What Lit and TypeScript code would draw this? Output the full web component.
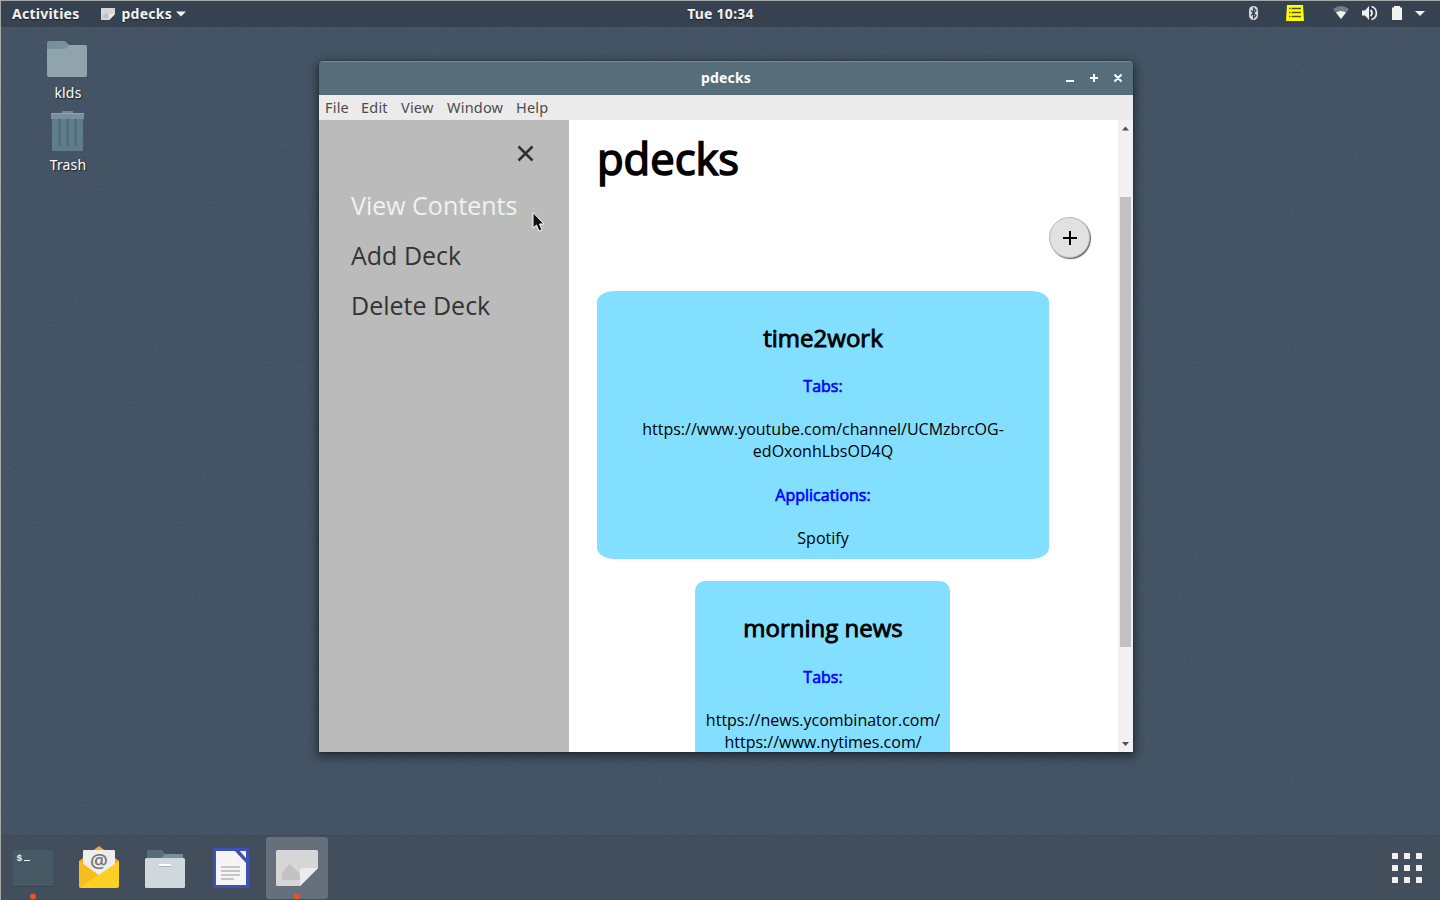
import { LitElement, html, css, svg } from "lit";
import { customElement } from "lit/decorators.js";

const note = () => svg`
  <path d="M1.500 0H40.500Q42 0 42 1.500V18L24 36H1.500Q0 36 0 34.500V1.500Q0 0 1.500 0Z" fill="#d6d6d6"/>
  <path d="M6 30V22.500L13.500 14L24 24V30Z" fill="#c2c2c2"/>
  <path d="M24 36V19.500Q24 18 25.500 18H42Z" fill="#ececec"/>`;

@customElement("app-root")
export class AppRoot extends LitElement {
  static styles = css`
    :host { display: block; width: 1440px; height: 900px; overflow: hidden; font-family: "Open Sans", sans-serif; }
    * { box-sizing: border-box; }
    svg { display: block; flex: none; }
    .desktop { position: relative; width: 1440px; height: 900px; display: flex; flex-direction: column; background: #405062; border-left: 1px solid #a5aaa8; }
    .grain { position: absolute; left: 0; top: 0; opacity: .07; }
    .topbar { position: relative; height: 27px; flex: none; background: #364250; border-top: 1px solid #a5aaa8; display: grid; grid-template-columns: 1fr auto 1fr; align-items: center; color: #f2f2f0; font: 700 14px/26px "Noto Sans", sans-serif; text-shadow: 0 1px 1px #0008; }
    .topbar span { height: 26px; line-height: 25px; white-space: nowrap; letter-spacing: .25px; }
    .left { display: flex; align-items: center; padding-left: 11px; }
    .left .app-icon { margin: 0 7px 0 21px; }
    .left .caret { margin-left: 4px; }
    .right { display: flex; justify-content: flex-end; }
    .main { flex: 1; position: relative; }
    .shortcuts { width: 132px; padding-top: 14px; display: flex; flex-direction: column; align-items: center; color: #fff; font: 14px/20px "Noto Sans", sans-serif; text-shadow: 1px 1px 1px #000a; }
    .shortcut { height: 70px; display: flex; flex-direction: column; align-items: center; gap: 5px; }
    .shortcut.trash { gap: 3px; }
    .shortcut span { padding-left: 2px; letter-spacing: .15px; }
    .shortcut.trash svg { margin-left: 1px; }
    .dock { position: relative; height: 65px; flex: none; background: #424e5b; border-top: 1px solid #3e4a57; display: flex; justify-content: space-between; }
    .window { position: absolute; left: 318px; top: 34px; width: 814px; height: 691px; display: flex; flex-direction: column; border-radius: 4px 4px 0 0; overflow: hidden; box-shadow: 0 3px 10px 2px #0007, 0 0 2px #0006; }
    .title { height: 34px; flex: none; background: #566e79; border-top: 1px solid #778b94; color: #fff; display: grid; grid-template-columns: 1fr auto 1fr; align-items: center; font: 700 14px/33px "Noto Sans", sans-serif; }
    .title span { height: 33px; line-height: 31px; letter-spacing: .2px; }
    .title svg { justify-self: end; }
    .menu { height: 25px; flex: none; background: #ebebeb; color: #4b4b4b; display: grid; grid-template-columns: 36px 40px 46px 69px auto; padding-left: 6px; font: 14.500px/25px "Noto Sans", sans-serif; letter-spacing: .2px; }
    .body { flex: 1; min-height: 0; display: flex; background: #fff; }
    .side { width: 250px; flex: none; background: #bbb; padding: 25px 32px; color: #333; font-size: 25px; line-height: 50px; }
    .side .close { margin: 0 3px 18px auto; }
    .side div { height: 50px; white-space: nowrap; }
    .side .hover { color: #f1f1f1; }
    .page { width: 549px; padding: 0 28px; overflow: hidden; color: #000; font-size: 16px; line-height: 22px; text-align: center; }
    h1 { margin: 8px 0 28px; text-align: left; font-size: 43.500px; line-height: 61px; height: 61px; font-weight: 400; -webkit-text-stroke: 1.600px #000; }
    .add { width: 41px; height: 41px; margin: 0 0 33px 452px; border-radius: 50%; background: #e1e1e1; border: 1px solid #b8b8b8; box-shadow: 1px 1px 1px #666; display: grid; place-items: center; }
    .card { width: 452px; height: 268px; margin-bottom: 22px; padding: 29px 10px 0; border-radius: 18px / 11px; background: #83dfff; }
    .card.small { width: 255px; margin-left: 98px; padding: 29px 9px 0 10px; border-radius: 10px; }
    h2 { margin: 0 0 19px; height: 36px; font-size: 24px; line-height: 36px; font-weight: 400; -webkit-text-stroke: .9px #000; }
    .small h2 { margin-bottom: 20px; }
    h4 { margin: 0 0 21px; height: 22px; font-size: 16px; line-height: 22px; font-weight: 400; color: #00f; -webkit-text-stroke: .6px #00f; }
    p { margin: 0 0 22px; white-space: nowrap; }
    .scroll { width: 15px; flex: none; background: #f1f1f1; display: flex; flex-direction: column; align-items: center; padding: 6px 0 5px; }
    .thumb { width: 11px; height: 450px; margin: 66px 0 auto; background: #c1c1c1; }
    .cursor { position: absolute; left: 531px; top: 212px; }
  `;

  render() {
    return html`<div class="desktop">
      <svg class="grain" width="1439" height="900"><filter id="g"><feTurbulence type="fractalNoise" baseFrequency=".45" numOctaves="2"/><feColorMatrix type="saturate" values="0"/></filter><rect width="1439" height="900" filter="url(#g)"/></svg>
      <div class="topbar">
        <div class="left">
          <span>Activities</span>
          <svg class="app-icon" width="14" height="12" viewBox="0 0 42 36">${note()}</svg>
          <span>pdecks</span>
          <svg class="caret" width="10" height="6"><path d="M0 .5H10L5 5.500Z" fill="#f2f2f0"/></svg>
        </div>
        <span>Tue 10:34</span>
        <div class="right"><svg width="200" height="26" viewBox="1240 1 200 26">
          <rect x="1249" y="6" width="9" height="14" rx="4.500" fill="#d6d9dc"/>
          <path d="M1251 10.500l5 5-2.500 2.500V8l2.500 2.500-5 5" fill="none" stroke="#364250" stroke-width="1.200"/>
          <path d="M1287 5h16l1 16h-18z" fill="#ff0"/>
          <path d="M1289 8.500h1.500M1289 12.500h1.500M1289 16.500h1.500M1291.500 8.500h9.500M1291.500 12.500h9.500M1291.500 16.500h9.500" stroke="#55541a" stroke-width="1.300"/>
          <path d="M1333 9Q1341 3 1349 9L1341 19Z" fill="#747d86"/><path d="M1336 12.500Q1341 9.500 1346 12.500L1341 19Z" fill="#f2f2f0"/>
          <path d="M1362 10.500h3l4-4.500v14l-4-4.500h-3z" fill="#f2f2f0"/>
          <path d="M1370.500 10q3 3 0 6" fill="none" stroke="#f2f2f0" stroke-width="1.800"/><path d="M1371.500 6.500c6.500 2 6.500 11 0 13" fill="none" stroke="#f2f2f0" stroke-width="1.600"/>
          <path d="M1392 7.500h2V6h6v1.500h2V20h-10z" fill="#f2f2f0"/><path d="M1415 11h10l-5 5z" fill="#f2f2f0"/>
        </svg></div>
      </div>
      <div class="main">
        <div class="shortcuts">
          <div class="shortcut"><svg width="40" height="37" viewBox="47 41 40 37"><path d="M47 43q0-2 2-2h16l4 4v8H47z" fill="#78909c"/><path d="M47 50q0-1 1-1h17l4-4h16q2 0 2 2v28q0 2-2 2H49q-2 0-2-2z" fill="#90a4ae"/></svg><span>klds</span></div>
          <div class="shortcut trash"><svg width="33" height="41" viewBox="51 111 33 41"><path d="M62 111h11v3H62z" fill="#70899a"/><path d="M52 118h31v32q0 1-1 1H53q-1 0-1-1z" fill="#607d8b"/><path d="M51 113h33v6H51z" fill="#78909c"/><path d="M51 113h33v1H51z" fill="#90a4ae"/><path d="M59.500 120v25M67.500 120v25M75.500 120v25" stroke="#526f7a" stroke-width="3" stroke-linecap="round"/></svg><span>Trash</span></div>
        </div>
        <div class="window">
          <div class="title"><i></i><span>pdecks</span>
            <svg width="80" height="33" viewBox="1053 62 80 33"><path d="M1066 81h8M1090 78h8M1094 74v8M1114.500 74.500l7 7M1121.500 74.500l-7 7" stroke="#fff" stroke-width="2"/></svg></div>
          <div class="menu"><span>File</span><span>Edit</span><span>View</span><span>Window</span><span>Help</span></div>
          <div class="body">
            <div class="side">
              <svg class="close" width="17" height="17"><path d="M1.500 1.500l14 14M15.500 1.500l-14 14" stroke="#303030" stroke-width="2.500"/></svg>
              <div class="hover">View Contents</div><div>Add Deck</div><div>Delete Deck</div>
            </div>
            <div class="page">
              <h1>pdecks</h1>
              <div class="add"><svg width="14" height="14"><path d="M0 7h14M7 0v14" stroke="#000" stroke-width="2"/></svg></div>
              <div class="card"><h2>time2work</h2><h4>Tabs:</h4><p>https://www.youtube.com/channel/UCMzbrcOG-<br>edOxonhLbsOD4Q</p><h4>Applications:</h4><p>Spotify</p></div>
              <div class="card small"><h2>morning news</h2><h4>Tabs:</h4><p>https://news.ycombinator.com/<br>https://www.nytimes.com/</p></div>
            </div>
            <div class="scroll"><svg width="8" height="5"><path d="M0 4.500L3.500 .5L7 4.500z" fill="#505050"/></svg><div class="thumb"></div><svg width="8" height="5"><path d="M0 0h7L3.500 4z" fill="#505050"/></svg></div>
          </div>
        </div>
      </div>
      <div class="dock">
        <svg width="340" height="64" viewBox="1 836 340 64">
          <rect x="266" y="837" width="62" height="62" rx="3" fill="#66707c"/>
          <rect x="13" y="851" width="40" height="36" rx="1.500" fill="#36434c"/><rect x="13" y="850" width="40" height="36" rx="1.500" fill="#465a65"/>
          <text x="16.500" y="861" font-family="Liberation Mono" font-weight="700" font-size="9.500" fill="#e8f4f8">$</text><path d="M24 860.500h6" stroke="#e8f4f8"/>
          <circle cx="33" cy="896.500" r="3" fill="#e95420"/><circle cx="297" cy="896.500" r="3" fill="#e95420"/>
          <path d="M79 861L99 846L119 861V875H79z" fill="#f9a825"/><path d="M83 851q0-1 1-1h30q1 0 1 1v26H83z" fill="#eee"/>
          <text x="99" y="868" text-anchor="middle" font-family="Open Sans" font-size="20" font-weight="600" fill="#777">@</text>
          <path d="M79 861l20 14 20-14v25q0 2-2 2H81q-2 0-2-2z" fill="#fbd022"/><path d="M79 861l19 14-18 12.500q-1-.5-1-1.500z" fill="#f6bd20"/>
          <path d="M147 851q0-1 1-1h13l4 4h17q1 0 1 1v6h-36z" fill="#78909c"/><path d="M147 851q0-1 1-1h13l4 4-4 4h-14z" fill="#546e7a"/>
          <rect x="145" y="858" width="40" height="30" rx="1.500" fill="#cfd8dc"/><path d="M159 865h12" stroke="#fff" stroke-width="2"/><path d="M159 866.500h12" stroke="#aab2b6"/>
          <rect x="213" y="848" width="36" height="40" rx="1.500" fill="#3f51b5"/><path d="M216 851h30v34h-30z" fill="#f5f5f5"/><path d="M234 850h5l8 9v5z" fill="#3f51b5"/><path d="M240 851h6v7z" fill="#f5f5f5"/><path d="M221 867h19M221 871h19M221 875h19M221 879h13" stroke="#c6c6c6" stroke-width="2"/>
          <svg x="276" y="850" width="42" height="36" viewBox="0 0 42 36">${note()}</svg>
        </svg>
        <svg width="100" height="64" viewBox="1340 836 100 64">${[1392, 1404, 1416].map(x => [853, 865, 877].map(y => svg`<rect x=${x} y=${y} width="6" height="6" rx=".5" fill="#f2f1f0"/>`))}</svg>
      </div>
      <svg class="cursor" width="13" height="21"><path d="M1 .5V16l3.500-3 2.500 6 3-1.300-2.500-5.700H12z" fill="#111" stroke="#fff"/></svg>
    </div>`;
  }
}
